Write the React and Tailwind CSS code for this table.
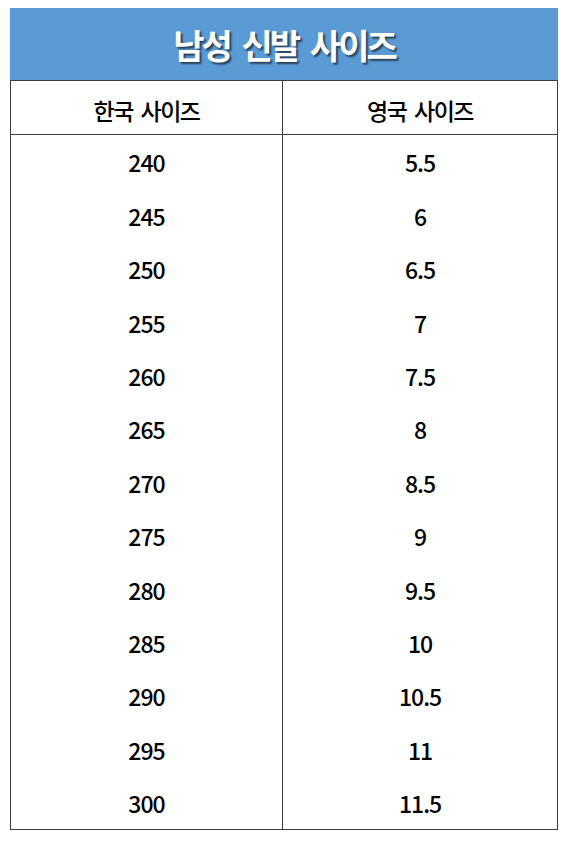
import React from "react";

const rows = [
  ["240", "5.5"],
  ["245", "6"],
  ["250", "6.5"],
  ["255", "7"],
  ["260", "7.5"],
  ["265", "8"],
  ["270", "8.5"],
  ["275", "9"],
  ["280", "9.5"],
  ["285", "10"],
  ["290", "10.5"],
  ["295", "11"],
  ["300", "11.5"],
];

export default function App() {
  return (
    <div className="min-h-[843px] w-[564px] bg-white pt-[8px] pl-[10px] [font-family:'Noto_Sans_CJK_KR','Noto_Sans',sans-serif]">
      <div className="w-[548px]">
        <div className="h-[72px] bg-[#5b9bd5] flex items-center justify-center text-white text-[34px] font-bold tracking-[-3px] [word-spacing:7px] [text-shadow:2px_2px_2px_rgba(0,0,0,0.6)]">
          남성 신발 사이즈
        </div>
        <div className="border border-[#3c3c3c]">
          <div className="grid grid-cols-[272px_1fr] h-[54px] border-b border-[#3c3c3c] text-black text-[23px] font-medium tracking-[-1.5px] [word-spacing:4px]">
            <div className="flex items-center justify-center border-r border-[#3c3c3c] pt-[6px]">한국 사이즈</div>
            <div className="flex items-center justify-center pt-[6px]">영국 사이즈</div>
          </div>
          {rows.map(([kr, uk]) => (
            <div key={kr} className="grid grid-cols-[272px_1fr] h-[53.4px] text-black text-[23px] font-medium tracking-[-1px]">
              <div className="flex items-center justify-center border-r border-[#3c3c3c] pt-[2px]">{kr}</div>
              <div className="flex items-center justify-center pt-[2px]">{uk}</div>
            </div>
          ))}
        </div>
      </div>
    </div>
  );
}
